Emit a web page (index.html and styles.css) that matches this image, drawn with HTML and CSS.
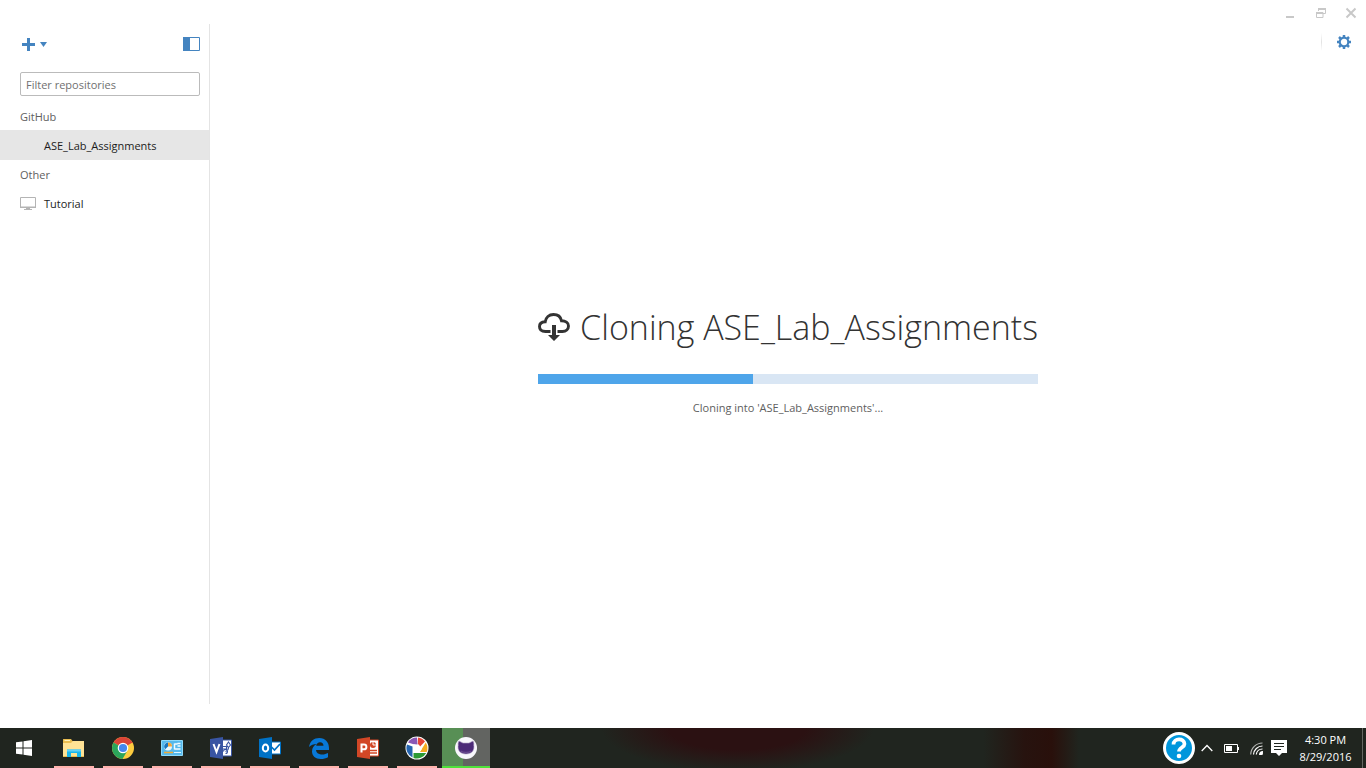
FILE: index.html
```html
<!DOCTYPE html>
<html lang="en">
<head>
<meta charset="utf-8">
<title>GitHub</title>
<link rel="stylesheet" href="styles.css">
</head>
<body>
<div class="window">
  <header class="titlebar">
    <button class="caption" aria-label="Minimize"><svg width="12" height="12" viewBox="0 0 12 12"><path d="M1 10h8" stroke="#c8c8c8" stroke-width="2"/></svg></button>
    <button class="caption" aria-label="Restore"><svg width="12" height="12" viewBox="0 0 12 12"><path d="M3.500 4V1.500h7v5H8M1.500 5.500h6.500v5h-6.500z" fill="none" stroke="#c8c8c8"/><path d="M3 2h8M1 6h7" stroke="#c8c8c8" stroke-width="2"/></svg></button>
    <button class="caption" aria-label="Close"><svg width="12" height="12" viewBox="0 0 12 12"><path d="M1.500 1.500l9 9M10.500 1.500l-9 9" stroke="#c8c8c8" stroke-width="2"/></svg></button>
  </header>
  <div class="workspace">
    <aside class="sidebar">
      <div class="sidebar-tools">
        <button class="tool" aria-label="Add repository"><svg width="28" height="14" viewBox="0 0 28 14"><path d="M2 7.500h13M8.500 1v13" stroke="#4484c0" stroke-width="3"/><path d="M20 5h7l-3.500 5z" fill="#4484c0"/></svg></button>
        <button class="tool" aria-label="Toggle sidebar"><svg width="17" height="14" viewBox="0 0 17 14"><path d="M.5.5h16v13H.5z" fill="#fff" stroke="#4484c0"/><path d="M0 0h7v14H0z" fill="#4484c0"/></svg></button>
      </div>
      <label class="filter"><input type="text" placeholder="Filter repositories" aria-label="Filter repositories"></label>
      <nav class="repos">
        <h2 class="group">GitHub</h2>
        <a class="repo selected" href="#ase"><span class="repo-icon"></span>ASE_Lab_Assignments</a>
        <h2 class="group">Other</h2>
        <a class="repo" href="#tutorial"><span class="repo-icon"><svg width="16" height="13" viewBox="0 0 16 13"><path d="M.5.5h15v9.500H.5z" fill="none" stroke="#b4b4b4"/><path d="M0 10.500h16M6 11.500h4M4 12.500h8" stroke="#b4b4b4"/></svg></span>Tutorial</a>
      </nav>
    </aside>
    <main class="main">
      <div class="main-tools">
        <span class="divider"></span>
        <button class="tool" aria-label="Settings"><svg width="14" height="14" viewBox="0 0 14 14"><g stroke="#4484c0" fill="none"><circle cx="7" cy="7" r="4.300" stroke-width="2.200"/><path d="M7 0v2.500M7 11.500V14M0 7h2.500M11.500 7H14M2 2l1.800 1.800M10.200 10.200L12 12M12 2l-1.800 1.800M3.800 10.200L2 12" stroke-width="2.500"/></g></svg></button>
      </div>
      <section class="progress-panel">
        <h1 class="heading"><svg class="cloud" width="32" height="28" viewBox="0 0 32 28"><path d="M12.500 18.500H7.500C4 18.500 1.500 16.800 1.500 13.500S4 9 7.200 8.800C7.800 4.500 11 1.500 15.500 1.500c4 0 7.200 2.300 8 6.300 4 0 7 2 7 5.200 0 3.300-2.500 5.500-6 5.500H19.500" fill="none" stroke="#333" stroke-width="2.900"/><path d="M14 12h4v10h4L16 28l-6-6h4z" fill="#333"/></svg><span>Cloning ASE_Lab_Assignments</span></h1>
        <div class="track" role="progressbar" aria-valuenow="43" aria-valuemin="0" aria-valuemax="100" aria-label="Cloning"><div class="fill" style="width:43%"></div></div>
        <p class="status">Cloning into 'ASE_Lab_Assignments'...</p>
      </section>
    </main>
  </div>
</div>
<footer class="taskbar">
  <button class="start" aria-label="Start"><svg width="16" height="16" viewBox="0 0 16 16" fill="#fff"><path d="M0 2.300l6.500-.9v6.100H0zM7.500 1.200L16 0v7.500H7.500zM0 8.500h6.500v6.100L0 13.700zM7.500 8.500H16V16l-8.500-1.200z"/></svg></button>
  <div class="apps">
    <button class="app" aria-label="File Explorer"><svg width="24" height="24" viewBox="0 0 24 24"><path d="M1 3.500Q1 3 1.500 3H9l1.500 2H22v16H1z" fill="#e9bd51"/><path d="M1 7h8l2-2h11v15H1z" fill="#ffe395"/><path d="M2.500 4.500H8" stroke="#fff2ba"/><path d="M5 13.500h14V21h-4v-4H9v4H5z" fill="#19b6ed"/><path d="M5 13.500h14v2H5z" fill="#62d2f7"/></svg></button>
    <button class="app" aria-label="Chrome"><svg width="24" height="24" viewBox="0 0 24 24"><circle cx="12" cy="12" r="11" fill="#fdcc3f"/><path d="M12 12L2.500 6.500a11 11 0 0 1 19 0z" fill="#db4437"/><path d="M12 12L2.500 6.500A11 11 0 0 0 11.500 23l5-8.500z" fill="#2ba55b"/><path d="M12 7h10l-.7-1H12z" fill="#db4437"/><circle cx="12" cy="12" r="5.300" fill="#fff"/><circle cx="12" cy="12" r="4.100" fill="#4587ed"/></svg></button>
    <button class="app" aria-label="Control Panel"><svg width="24" height="24" viewBox="0 0 24 24"><path d="M1.500 4.500h21v15h-21z" fill="#56b9ec" stroke="#8edafa"/><circle cx="8" cy="10.500" r="4" fill="#e8f8ff"/><path d="M8 10.500v-4a4 4 0 0 1 4 4z" fill="#f5a536"/><path d="M8 10.500l-2.800 2.800A4 4 0 0 1 8 6.500z" fill="#1875bd"/><path d="M14.500 7.500v6M14.500 8h3M14.500 13h3M17.500 7.500h3M17.500 10h3M17.500 13h3" fill="none" stroke="#f3fcff" stroke-width="1.500"/><path d="M4 16.500h9" stroke="#edac3b" stroke-width="1.500"/><path d="M14 16.500h7" stroke="#dff7ff"/></svg></button>
    <button class="app" aria-label="Visio"><svg width="24" height="24" viewBox="0 0 24 24"><path d="M12 4h10.500v16H12z" fill="#fff" stroke="#3955a3"/><path d="M14 10.500h3.500V13H14M19.500 11.500l2-2.500-2-3-2 3zM19.500 11.500q0 3-3 4M14.500 15.500a2 2 0 1 1 2 2" fill="none" stroke="#3955a3" stroke-width="1.100"/><path d="M1 3l13-2v22L1 21z" fill="#3955a3"/><path d="M4.500 8l3 8 3-8" fill="none" stroke="#fff" stroke-width="2"/></svg></button>
    <button class="app" aria-label="Outlook"><svg width="24" height="24" viewBox="0 0 24 24"><path d="M12 6h10.500v12H12z" fill="#fff" stroke="#0072c6"/><path d="M13 10.500l3.500 3.500L22 8" fill="none" stroke="#0072c6" stroke-width="1.700"/><path d="M1 3l13-2v22L1 21z" fill="#0072c6"/><ellipse cx="7.500" cy="12" rx="2.700" ry="3.500" fill="none" stroke="#fff" stroke-width="2"/></svg></button>
    <button class="app" aria-label="Edge"><svg width="24" height="24" viewBox="0 0 24 24"><path d="M2 11C3 5 7 2 12.300 2 18.500 2 22 6.500 22 12v2H9c.2 3 3 4.500 6.300 4.500 2.200 0 4-.6 5.700-1.500v4.200c-2 1.200-4.400 1.800-7.300 1.800C8.500 23 5 20 5 15.500c0-3.500 1.800-6 4.700-7.500C6.500 8 4 9 2 11zm7.200-1.300h7.300C16.400 7.500 15.300 6.300 13 6.300c-2 0-3.300 1.200-3.800 3.400z" fill="#0878d7" fill-rule="evenodd"/></svg></button>
    <button class="app" aria-label="PowerPoint"><svg width="24" height="24" viewBox="0 0 24 24"><path d="M12 4h10.500v16H12z" fill="#fff" stroke="#d24726"/><circle cx="17" cy="9" r="3" fill="#d24726"/><path d="M17 9V6M17 9h3" stroke="#fff"/><path d="M14 14.500h7M14 17h7" stroke="#d24726" stroke-width="1.300"/><path d="M1 3l13-2v22L1 21z" fill="#d24726"/><path d="M5.500 16.500V8.500H8a2.400 2.400 0 0 1 0 4.800H6" fill="none" stroke="#fff" stroke-width="2"/></svg></button>
    <button class="app" aria-label="Picasa"><svg width="24" height="24" viewBox="0 0 24 24"><circle cx="12" cy="12" r="11.500" fill="#fff"/><path d="M12 1.500A10.500 10.500 0 0 0 3 6.500L12.500 9.500z" fill="#8a57b5"/><path d="M13 1.500a10.500 10.500 0 0 1 7 4L12.700 13z" fill="#e74538"/><path d="M20.700 6.500a10.500 10.500 0 0 1 1 9.500H15z" fill="#f5ab20"/><path d="M21.200 17A10.500 10.500 0 0 1 8.500 22V17z" fill="#2c9a35"/><path d="M2 8.500A10.500 10.500 0 0 0 7.500 21.500V10.500z" fill="#2564ae"/><path d="M8.300 8.300l5.500.2 3 4.500-3 3.700H8.300z" fill="#fff"/></svg></button>
    <button class="app active" aria-label="GitHub"><svg width="24" height="24" viewBox="0 0 24 24"><circle cx="12" cy="12" r="11" fill="#f8f7fc"/><path d="M5 5l4 2h6l4-2c1 1.500 1 3 .8 4 1 5-1.800 9-7.800 9S3.200 14 4.200 9C4 8 4 6.500 5 5z" fill="#4c2a78" stroke="#b5a7c7" stroke-width=".6"/><path d="M6.500 15c3 2 8 2 11 0" fill="none" stroke="#67498e" stroke-width="1.500"/></svg></button>
  </div>
  <div class="tray">
    <button class="tray-item help" aria-label="Help"><svg width="32" height="32" viewBox="0 0 32 32"><circle cx="16" cy="16" r="14.500" fill="#0096dc" stroke="#fff" stroke-width="3"/><path d="M10.500 12.500C10.500 5.800 21.500 5.700 21.500 12c0 3.500-5.500 3.500-5.500 7.500" fill="none" stroke="#fff" stroke-width="3.700"/><circle cx="16" cy="24" r="2.300" fill="#fff"/></svg></button>
    <button class="tray-item chevron" aria-label="Show hidden icons"><svg width="12" height="8" viewBox="0 0 12 8"><path d="M.7 7L6 1.500 11.300 7" fill="none" stroke="#fff" stroke-width="1.300"/></svg></button>
    <button class="tray-item battery" aria-label="Battery"><svg width="15" height="9" viewBox="0 0 15 9"><path d="M.5.500h13v8H.5zM14.500 3v3" fill="none" stroke="#fff"/><path d="M2 2h6v5H2z" fill="#fff"/></svg></button>
    <button class="tray-item wifi" aria-label="Network"><svg width="13" height="13" viewBox="0 0 13 13"><g fill="none" stroke="#fff" stroke-width="1.200"><path d="M.7 12.500A11.800 11.800 0 0 1 12.500 1" opacity=".65"/><path d="M3.500 12.500a9 9 0 0 1 9-8.500M6.300 12.500a6.200 6.200 0 0 1 6.200-5.500"/></g><path d="M9 13a4 4 0 0 1 4-4v1.500L11 13z" fill="#fff"/><circle cx="11.500" cy="11.500" r="1.500" fill="#fff"/></svg></button>
    <button class="tray-item notes" aria-label="Notifications"><svg width="16" height="16" viewBox="0 0 16 16"><path d="M0 0h16v13h-5l-3 3-3-3H0z" fill="#fff"/><path d="M3 3.500h10M3 6.500h10M3 9.500h7" stroke="#20251f"/></svg></button>
    <button class="tray-item clock"><span>4:30 PM</span><span>8/29/2016</span></button>
    <button class="tray-item desktop" aria-label="Show desktop"></button>
  </div>
</footer>
</body>
</html>
```
FILE: styles.css
```css
* { box-sizing: border-box; }
body {
  margin: 0;
  min-height: 100vh;
  display: flex;
  flex-direction: column;
  background: #fff;
  color: #333;
  font: 11px/16px "Open Sans", "Noto Sans", sans-serif;
}
button { padding: 0; border: 0; background: none; color: inherit; font: inherit; }
svg { display: block; flex: none; }
h1, h2, p { margin: 0; font-weight: 400; }

.window { flex: 1; display: flex; flex-direction: column; padding-bottom: 24px; }
.titlebar { display: flex; justify-content: flex-end; gap: 18px; height: 24px; padding: 7px 9px 0 0; }
.caption { width: 12px; height: 12px; }
.workspace { flex: 1; display: flex; }

.sidebar { width: 210px; border-right: 1px solid #e4e4e4; }
.sidebar-tools { display: flex; justify-content: space-between; padding: 13px 9px 0 20px; }
.filter { display: block; padding: 21px 9px 0 20px; }
.filter input {
  display: block;
  width: 100%;
  height: 24px;
  padding: 0 5px;
  border: 1px solid #bbb;
  border-radius: 2px;
  background: #fff;
  color: #333;
  font: inherit;
}
.filter input::placeholder { color: #707070; opacity: 1; }
.repos { padding-top: 6px; }
.group { height: 28px; padding: 0 20px; color: #606060; font-size: 11px; line-height: 30px; }
.repo {
  display: flex;
  align-items: center;
  height: 30px;
  padding: 1px 0 0 20px;
  color: #1c1c1c;
  text-decoration: none;
}
.repo.selected { background: #e6e6e6; }
.repo-icon { width: 24px; }

.main { flex: 1; display: flex; flex-direction: column; }
.main-tools { display: flex; justify-content: flex-end; align-items: center; gap: 15px; height: 36px; padding-right: 15px; }
.divider { width: 1px; height: 18px; background: linear-gradient(#fff, #e2e2e2, #fff); }
.progress-panel { flex: 1; display: flex; flex-direction: column; align-items: center; justify-content: center; padding-bottom: 46px; }
.heading {
  display: flex;
  align-items: center;
  justify-content: space-between;
  width: 500px;
  font-size: 34px;
  font-weight: 300;
  line-height: 48px;
  white-space: nowrap;
}
.track { width: 500px; height: 10px; margin-top: 23px; background: #d9e6f4; }
.fill { height: 100%; background: #4ea5ea; }
.status { margin-top: 16px; color: #606060; }

.taskbar {
  display: flex;
  justify-content: space-between;
  height: 40px;
  color: #fff;
  background:
    radial-gradient(ellipse 10% 110% at 54% 0, #2b1112 50%, transparent),
    linear-gradient(90deg, transparent 72%, #27130f 75%, #29100b 77%, transparent 79%),
    #20251f;
}
.start { display: flex; align-items: center; justify-content: center; width: 48px; }
.apps { flex: 1; display: flex; gap: 1px; padding-left: 2px; }
.app { display: flex; flex-direction: column; align-items: center; justify-content: space-between; width: 48px; padding-top: 8px; }
.app::after { content: ""; width: 40px; height: 2px; background: #ffb3ad; }
.app.active { background: linear-gradient(90deg, #588f55 21px, #626461 21px); }
.app.active::after { width: 100%; background: #4fe23a; }
.tray { display: flex; align-items: center; }
.chevron { margin-left: 6px; }
.battery { margin-left: 11px; }
.wifi { margin-left: 11px; }
.notes { margin-left: 8px; }
.clock { display: flex; flex-direction: column; align-items: center; width: 75px; padding-left: 2px; line-height: 17px; }
.desktop { width: 4px; height: 100%; border-left: 1px solid #646762; }
```
